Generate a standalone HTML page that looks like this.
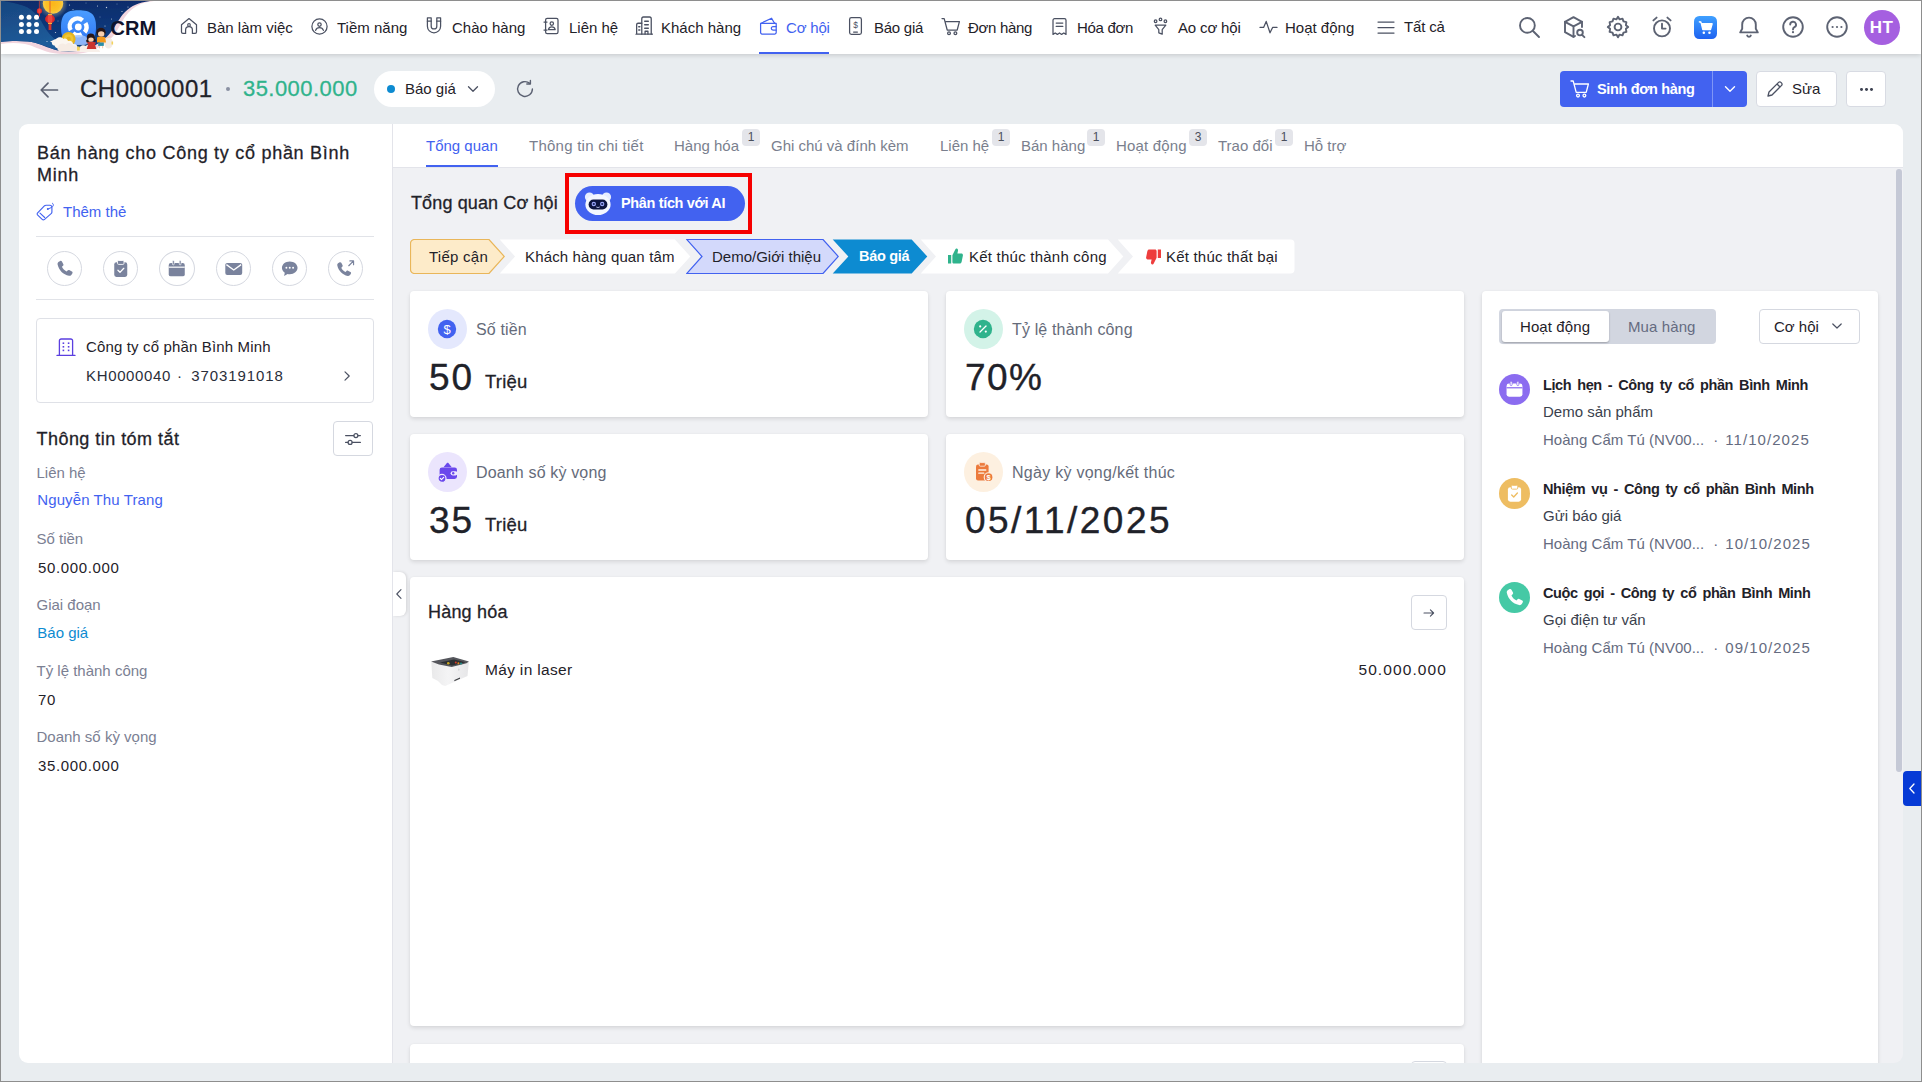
<!DOCTYPE html>
<html lang="vi">
<head>
<meta charset="utf-8">
<title>CRM</title>
<style>
*{box-sizing:border-box;margin:0;padding:0}
html,body{width:1922px;height:1082px;overflow:hidden}
body{font-family:"Liberation Sans",sans-serif;background:#e9edf0;color:#1f2229;position:relative;font-size:15px}
.abs{position:absolute}
.t{position:absolute;white-space:nowrap;line-height:1}
#frame{position:absolute;left:0;top:0;width:1922px;height:1082px;border:1px solid #8e8e8e;z-index:100;pointer-events:none}
/* nav */
#nav{position:absolute;left:1px;top:1px;width:1920px;height:53px;background:#fff;box-shadow:0 1px 5px rgba(0,0,0,.17)}
.ni{position:absolute;top:0;height:53px}
.nt{position:absolute;top:18px;font-size:15px;line-height:17px;white-space:nowrap;color:#1f2229}
.nic{position:absolute}
/* panels */
#left{position:absolute;left:19px;top:124px;width:373px;height:939px;background:#fff;border-radius:9px 0 0 9px}
#main{position:absolute;left:393px;top:124px;width:1510px;height:939px;background:#f0f1f4;border-radius:0 9px 9px 0;overflow:hidden}
#tabs{position:absolute;left:0;top:0;width:1510px;height:44px;background:#fff;border-bottom:1px solid #e3e4ea}
.tab{position:absolute;top:13px;font-size:15px;line-height:17px;color:#7a7f8e;white-space:nowrap}
.bdg{position:absolute;top:5px;width:18px;height:17px;border-radius:4px;background:#e4e5ea;color:#4a4f5c;font-size:12px;line-height:17px;text-align:center}
.card{position:absolute;background:#fff;border-radius:4px;box-shadow:0 2px 4px rgba(0,0,0,.11),0 0 2px rgba(0,0,0,.04)}
.lbl{color:#7b8093}
.ts{-webkit-text-stroke:.28px currentColor}
.blue{color:#4262f0}
</style>
</head>
<body>
<div id="nav">
<svg class="abs" style="left:0;top:0" width="170" height="53" viewBox="1 1 170 53">
<defs>
<linearGradient id="gb" x1="0" y1="0" x2="0" y2="1"><stop offset="0" stop-color="#0a2c6c"/><stop offset="1" stop-color="#114286"/></linearGradient>
<linearGradient id="gw" x1="0" y1="0" x2="0.300" y2="1"><stop offset="0" stop-color="#17457f"/><stop offset="1" stop-color="#1f5c9a"/></linearGradient>
<linearGradient id="gl" x1="0" y1="0" x2="0" y2="1"><stop offset="0" stop-color="#4a9dff"/><stop offset="1" stop-color="#2e74f4"/></linearGradient>
<radialGradient id="gm"><stop offset="0" stop-color="#fbb51a"/><stop offset=".7" stop-color="#fbc128"/><stop offset="1" stop-color="#f8cc4a"/></radialGradient>
<radialGradient id="gg"><stop offset=".6" stop-color="#ffe9a0" stop-opacity=".35"/><stop offset="1" stop-color="#ffe9a0" stop-opacity="0"/></radialGradient>
<filter id="bf"><feGaussianBlur stdDeviation=".35"/></filter>
</defs>
<g filter="url(#bf)">
<path d="M1 1H154C141 2.500 135 6 128.500 12.500C123 18.500 120 26 115.500 33C110 41 100 48 88 52C76 55 62 55 50 52.500C40 50 33 45.500 25 44C16 42.500 8 43 1 44Z" fill="#f1d5de"/>
<path d="M1 1H150C138 2.500 132 5.500 125 12C119 18 116 26 111 32C106 39 98 45 86 49C74 52.500 64 52.500 54 49.500C44 46.500 38 42.500 28 41.500C18 40.500 8 41 1 42Z" fill="url(#gb)"/>
<path d="M1 1H3C14 3 24 5 30 9C37 14 40 19 44 26C48 33 52 37 57 41C60 44 60 47 56 50C46 46.500 38 42.500 28 41.500C18 40.500 8 41 1 42Z" fill="url(#gw)"/>
<circle cx="53" cy="3.500" r="15" fill="url(#gg)"/>
<circle cx="53" cy="3.500" r="10.200" fill="url(#gm)"/>
<path d="M39.400 1V8.500M50 1V14" stroke="#d8342c" stroke-width=".7"/>
<ellipse cx="39.400" cy="11" rx="2.600" ry="2.700" fill="#d92b2b"/><ellipse cx="39.400" cy="11" rx="1.200" ry="2.700" fill="#ee4a40"/>
<rect x="38.900" y="13.600" width="1" height="3" fill="#d8342c"/>
<ellipse cx="50" cy="19" rx="4.900" ry="4.400" fill="#d92b2b"/><ellipse cx="50" cy="19" rx="2.400" ry="4.400" fill="#ee4a40"/>
<rect x="48" y="14" width="4" height="1.100" fill="#f4b43a"/><rect x="48" y="22.900" width="4" height="1.100" fill="#f4b43a"/>
<rect x="48.600" y="24" width="2.800" height="6" fill="#d8342c"/>
<g fill="#fff"><circle cx="21.400" cy="17.200" r="2.500"/><circle cx="29" cy="17.200" r="2.500"/><circle cx="36.500" cy="17.200" r="2.500"/><circle cx="21.400" cy="24.400" r="2.500"/><circle cx="29" cy="24.400" r="2.500"/><circle cx="36.500" cy="24.400" r="2.500"/><circle cx="21.400" cy="31.600" r="2.500"/><circle cx="29" cy="31.600" r="2.500"/><circle cx="36.500" cy="31.600" r="2.500"/></g>
<path d="M78.500 10.200C91 10.200 96 14 96 27C96 40 91 44.200 78.500 44.200C66 44.200 61 40 61 27C61 14 66 10.200 78.500 10.200Z" fill="url(#gl)"/>
<g fill="none" stroke="#fff" stroke-width="4.400"><path d="M70.800 30.200A7.800 7.800 0 0 1 82.600 20.300"/><path d="M85.400 23.200A7.800 7.800 0 0 1 84.600 32.200"/><path d="M81.800 34.200A7.800 7.800 0 0 1 73 33"/></g>
<circle cx="78.300" cy="27" r="3.400" fill="#fff"/>
<path d="M70 38c3-4 14-4 18 0 3 3 0 7-4 7H72c-4 0-5-4-2-7z" fill="#9cc1fb" opacity=".85"/>
<circle cx="68.600" cy="39" r="7" fill="#e6b41e"/><circle cx="68.600" cy="39" r="4.800" fill="#f0c535"/><circle cx="68.600" cy="39" r="2.200" fill="#e6b41e"/>
<path d="M50 41.500c2-.5 4-2 6-2.500 2-2.500 6-2.500 7.500 0 2-1 4 0 4.500 2 2.500-1 5 .5 5 3 3-.5 5 1.500 4.500 4H59c-2 .5-4-.5-4.500-2.500-2 0-3-1.500-2.500-3z" fill="#fbf6f0"/>
<path d="M58 46.500c1-3 5-4 7.500-2 2-2.500 6.500-2 7.500 1 2.500-.5 4.500 1 4.500 3 2 0 3 1.500 2.500 3H61c-3 0-4.500-2.500-3-5z" fill="#f6ece4"/>
<path d="M80 47c1-2 4-2.500 6-1 1-2 5-2 6 0 3-.5 5 1 5 3.500 2 0 3 1 3 2.500H80c-2-1-2-3.500 0-5z" fill="#f8f0ea"/>
<ellipse cx="108.500" cy="43" rx="4.300" ry="5.600" fill="#f3ebe4"/>
<rect x="77" y="46.500" width="2.800" height="4" rx=".6" fill="#f3d35c"/><rect x="111.500" y="41.500" width="1.600" height="3" fill="#f3d35c"/>
<path d="M86.300 42.500l5-1.200 5.200 1.400-1.600 1.200 1.400 5h-9.600l1.600-5z" fill="#c9352e"/>
<circle cx="90.800" cy="37.600" r="4" fill="#2b1912"/><circle cx="87.600" cy="40.800" r="1.500" fill="#2b1912"/><circle cx="94.600" cy="40.400" r="1.300" fill="#2b1912"/><ellipse cx="91" cy="39.600" rx="2.700" ry="2.200" fill="#f7cfae"/>
<circle cx="101" cy="32.300" r="4.600" fill="#2b1912"/><ellipse cx="101.200" cy="34" rx="3.200" ry="2.800" fill="#f7cfae"/>
<path d="M97 38.200c0-1 1-1.400 2-1.400h4c1 0 2.200.4 2.400 1.400l.6 4.300h-9z" fill="#f59a1f"/>
<path d="M105 38.400l5.500-2" stroke="#f7cfae" stroke-width="1.100"/>
<rect x="98.200" y="42.500" width="5.600" height="3.400" fill="#2a8ea6"/>
<path d="M99.500 45.900v2.300M102.600 45.900v2.300" stroke="#f7cfae" stroke-width="1.100"/>
<g fill="#fff" opacity=".75"><circle cx="69.500" cy="5" r=".6"/><circle cx="73" cy="9.500" r=".5"/><circle cx="97.500" cy="6" r=".55"/><circle cx="106.500" cy="7.500" r=".7"/><circle cx="122" cy="11.500" r=".6"/><circle cx="128" cy="7" r=".6"/><circle cx="105" cy="26" r=".55"/><circle cx="111.500" cy="19" r=".5"/><circle cx="55.500" cy="32.500" r=".6"/><circle cx="47" cy="41.500" r=".6"/><circle cx="58" cy="21" r=".45"/><circle cx="86" cy="3" r=".45"/><circle cx="117" cy="4" r=".45"/><circle cx="100" cy="17" r=".45"/></g>
</g>
</svg>
<div class="t" style="left:109.500px;top:15.500px;font-size:20px;font-weight:bold;line-height:22px;color:#10132c;letter-spacing:.05px">CRM</div>
<svg class="abs" style="left:179px;top:16px" width="18" height="18" viewBox="0 0 18 18"><path d="M1.500 7.800 9 1.600l7.500 6.200v7.200a1.400 1.400 0 0 1-1.400 1.400h-2.700v-3.300a3.400 3.400 0 0 0-6.800 0v3.300h-2.700a1.400 1.400 0 0 1-1.400-1.400z" stroke="#4b5162" stroke-width="1.25" fill="none" stroke-linecap="round" stroke-linejoin="round"/><circle cx="9" cy="8" r="1.350" stroke="#4b5162" stroke-width="1.100" fill="none"/></svg>
<div class="nt " style="left:206px">Bàn làm việc</div>
<svg class="abs" style="left:310px;top:17px" width="17" height="17" viewBox="0 0 17 17"><circle cx="8.5" cy="8.5" r="7.6" stroke="#4b5162" stroke-width="1.25" fill="none" stroke-linecap="round" stroke-linejoin="round"/><circle cx="8.5" cy="6.6" r="1.7" stroke="#4b5162" stroke-width="1.25" fill="none" stroke-linecap="round" stroke-linejoin="round"/><path d="M4.6 12.4c.7-2 2.2-2.8 3.9-2.8s3.2.8 3.9 2.8" stroke="#4b5162" stroke-width="1.25" fill="none" stroke-linecap="round" stroke-linejoin="round"/></svg>
<div class="nt " style="left:336px">Tiềm năng</div>
<svg class="abs" style="left:424px;top:15px" width="18" height="19" viewBox="0 0 18 19"><path d="M2.4 1.8h3.8v8.4a2.8 2.8 0 0 0 5.6 0V1.8h3.8v8.4a6.6 6.6 0 0 1-13.2 0z" stroke="#4b5162" stroke-width="1.25" fill="none" stroke-linecap="round" stroke-linejoin="round"/><path d="M2.4 5.2h3.8M11.8 5.2h3.8" stroke="#4b5162" stroke-width="1.25" fill="none" stroke-linecap="round" stroke-linejoin="round"/></svg>
<div class="nt " style="left:451px">Chào hàng</div>
<svg class="abs" style="left:542px;top:16px" width="17" height="18" viewBox="0 0 17 18"><rect x="2.6" y="1.4" width="12.4" height="15.2" rx="1.6" stroke="#4b5162" stroke-width="1.25" fill="none" stroke-linecap="round" stroke-linejoin="round"/><path d="M1 5h3M1 13h3" stroke="#4b5162" stroke-width="1.25" fill="none" stroke-linecap="round" stroke-linejoin="round"/><circle cx="8.8" cy="6.6" r="1.7" stroke="#4b5162" stroke-width="1.25" fill="none" stroke-linecap="round" stroke-linejoin="round"/><path d="M5.4 12.6c.5-2 1.8-2.8 3.4-2.8s2.900.8 3.400 2.800z" stroke="#4b5162" stroke-width="1.25" fill="none" stroke-linecap="round" stroke-linejoin="round"/></svg>
<div class="nt " style="left:568px">Liên hệ</div>
<svg class="abs" style="left:633.500px;top:14px" width="18.500" height="21" viewBox="0 0 18 18" preserveAspectRatio="none"><path d="M6.600 16.400v-13a1.600 1.600 0 0 1 1.600-1.600h6a1.600 1.600 0 0 1 1.600 1.600v13" stroke="#4b5162" stroke-width="1.25" fill="none" stroke-linecap="round" stroke-linejoin="round"/><path d="M1.600 16.400v-8a1.400 1.400 0 0 1 1.400-1.400h3.600M1 16.400h16" stroke="#4b5162" stroke-width="1.25" fill="none" stroke-linecap="round" stroke-linejoin="round"/><path d="M9.400 5.400h3.600M9.400 8.400h3.600M9.400 11.400h3.600M3.600 10h1.200M3.600 12.800h1.200" stroke="#4b5162" stroke-width="1.25" fill="none" stroke-linecap="round" stroke-linejoin="round"/><path d="M9.800 16.400v-2.400h2.800v2.400" stroke="#4b5162" stroke-width="1.25" fill="none" stroke-linecap="round" stroke-linejoin="round"/></svg>
<div class="nt " style="left:660px">Khách hàng</div>
<svg class="abs" style="left:758px;top:16px" width="19" height="18" viewBox="0 0 19 18"><path d="M1.600 6.400h15.600v9.200a1.400 1.400 0 0 1-1.400 1.400h-12.800a1.400 1.400 0 0 1-1.400-1.400z" stroke="#4262f0" stroke-width="1.25" fill="none" stroke-linecap="round" stroke-linejoin="round"/><path d="M2.200 6.200 12.600 1.200l2 3.600M14.600 4.800l1.200 1.400" stroke="#4262f0" stroke-width="1.25" fill="none" stroke-linecap="round" stroke-linejoin="round"/><path d="M17.200 9.600h-3.200a1.700 1.700 0 0 0 0 3.400h3.200" stroke="#4262f0" stroke-width="1.25" fill="none" stroke-linecap="round" stroke-linejoin="round"/></svg>
<div class="nt blue" style="left:785px;letter-spacing:-.2px">Cơ hội</div>
<svg class="abs" style="left:847px;top:15px" width="15" height="20" viewBox="0 0 15 20"><rect x="1.600" y="1.600" width="11.800" height="16.800" rx="1.800" stroke="#4b5162" stroke-width="1.25" fill="none" stroke-linecap="round" stroke-linejoin="round"/><path d="M5.600 16h3.800" stroke="#4b5162" stroke-width="1.25" fill="none" stroke-linecap="round" stroke-linejoin="round"/><text x="7.500" y="12" font-size="8.500" font-family="Liberation Sans" text-anchor="middle" fill="#4b5162">$</text></svg>
<div class="nt " style="left:873px;letter-spacing:-.25px">Báo giá</div>
<svg class="abs" style="left:940px;top:16px" width="20" height="19" viewBox="0 0 20 19"><path d="M1 1.600h2.200l3 11.400h10l2.200-8.400h-13.400" stroke="#4b5162" stroke-width="1.25" fill="none" stroke-linecap="round" stroke-linejoin="round"/><circle cx="8" cy="16.200" r="1.400" stroke="#4b5162" stroke-width="1.25" fill="none" stroke-linecap="round" stroke-linejoin="round"/><circle cx="14.400" cy="16.200" r="1.400" stroke="#4b5162" stroke-width="1.25" fill="none" stroke-linecap="round" stroke-linejoin="round"/></svg>
<div class="nt " style="left:967px;letter-spacing:-.3px">Đơn hàng</div>
<svg class="abs" style="left:1050px;top:16px" width="17" height="19" viewBox="0 0 17 19"><path d="M2 17.400v-14.200a1.600 1.600 0 0 1 1.600-1.600h9.800a1.600 1.600 0 0 1 1.600 1.600v14.200l-2.200-1.400-2.200 1.400-2.100-1.400-2.100 1.400-2.200-1.400z" stroke="#4b5162" stroke-width="1.25" fill="none" stroke-linecap="round" stroke-linejoin="round"/><path d="M5.200 6h6.600M5.200 9.400h6.600" stroke="#4b5162" stroke-width="1.25" fill="none" stroke-linecap="round" stroke-linejoin="round"/></svg>
<div class="nt " style="left:1076px;letter-spacing:-.3px">Hóa đơn</div>
<svg class="abs" style="left:1151px;top:16px" width="17" height="19" viewBox="0 0 17 19"><circle cx="3.600" cy="4.200" r="1.300" stroke="#4b5162" stroke-width="1.25" fill="none" stroke-linecap="round" stroke-linejoin="round"/><circle cx="8.500" cy="2.400" r="1.300" stroke="#4b5162" stroke-width="1.25" fill="none" stroke-linecap="round" stroke-linejoin="round"/><circle cx="13.400" cy="4.200" r="1.300" stroke="#4b5162" stroke-width="1.25" fill="none" stroke-linecap="round" stroke-linejoin="round"/><path d="M3.200 8.200h10.600l-3.600 4.400v4.600l-3.400-1.400v-3.200z" stroke="#4b5162" stroke-width="1.25" fill="none" stroke-linecap="round" stroke-linejoin="round"/></svg>
<div class="nt " style="left:1177px;letter-spacing:-.15px">Ao cơ hội</div>
<svg class="abs" style="left:1258px;top:18px" width="19" height="16" viewBox="0 0 19 16"><path d="M1 8.400h3.600l2.600-6 3.800 11.400 2.600-5.400h4.400" stroke="#4b5162" stroke-width="1.25" fill="none" stroke-linecap="round" stroke-linejoin="round"/></svg>
<div class="nt " style="left:1284px">Hoạt động</div>
<svg class="abs" style="left:1376px;top:19px" width="18" height="15" viewBox="0 0 18 15"><path d="M1 2h16M1 7.500h16M1 13h16" stroke="#4b5162" stroke-width="1.25" fill="none" stroke-linecap="round" stroke-linejoin="round"/></svg>
<div class="nt " style="left:1403px;top:16.500px;letter-spacing:-.15px">Tất cả</div>
<div class="abs" style="left:758px;top:51px;width:70px;height:2px;background:#4262f0"></div>
<svg class="abs" style="left:1516px;top:14px" width="24" height="24" viewBox="0 0 24 24"><circle cx="10.400" cy="10.400" r="7.400" stroke="#5d6373" stroke-width="1.900" fill="none" stroke-linecap="round" stroke-linejoin="round"/><path d="M16 16l6 6" stroke="#5d6373" stroke-width="1.900" fill="none" stroke-linecap="round" stroke-linejoin="round"/></svg>
<svg class="abs" style="left:1561px;top:14px" width="24" height="24" viewBox="0 0 24 24"><path d="M20 12v-5.200l-8.500-4.600-8.500 4.600v10.400l8.500 4.600 1.500-.8" stroke="#5d6373" stroke-width="1.900" fill="none" stroke-linecap="round" stroke-linejoin="round"/><path d="M3 6.800l8.500 4.600 8.500-4.600M11.500 11.400v10.400" stroke="#5d6373" stroke-width="1.900" fill="none" stroke-linecap="round" stroke-linejoin="round"/><circle cx="18" cy="17.600" r="2.800" stroke="#5d6373" stroke-width="1.900" fill="none" stroke-linecap="round" stroke-linejoin="round"/><path d="M20 19.800l2.400 2.400" stroke="#5d6373" stroke-width="1.900" fill="none" stroke-linecap="round" stroke-linejoin="round"/></svg>
<svg class="abs" style="left:1605px;top:14px" width="24" height="24" viewBox="0 0 24 24"><circle cx="12" cy="12" r="3.400" stroke="#5d6373" stroke-width="1.900" fill="none" stroke-linecap="round" stroke-linejoin="round"/><path d="M12 1.800l1.600 2.600 2.900-.8 1 2.800 2.900.8-.5 3 2.300 1.800-2.300 1.800.5 3-2.900.8-1 2.800-2.900-.8-1.600 2.600-1.600-2.600-2.900.8-1-2.800-2.900-.8.500-3-2.300-1.800 2.300-1.800-.5-3 2.900-.8 1-2.800 2.900.8z" stroke="#5d6373" stroke-width="1.900" fill="none" stroke-linecap="round" stroke-linejoin="round"/></svg>
<svg class="abs" style="left:1649px;top:14px" width="24" height="24" viewBox="0 0 24 24"><circle cx="12" cy="13.400" r="8" stroke="#5d6373" stroke-width="1.900" fill="none" stroke-linecap="round" stroke-linejoin="round"/><path d="M12 8.800v4.800h3.600M3.400 5.400l3.200-2.800M20.600 5.400l-3.200-2.800" stroke="#5d6373" stroke-width="1.900" fill="none" stroke-linecap="round" stroke-linejoin="round"/></svg>
<svg class="abs" style="left:1693px;top:15px" width="23" height="23" viewBox="0 0 22 22"><defs><linearGradient id="gc" x1="0" y1="0" x2="0" y2="1"><stop offset="0" stop-color="#3fa0ff"/><stop offset="1" stop-color="#1e62f0"/></linearGradient></defs><rect width="22" height="22" rx="5" fill="url(#gc)"/><path d="M4.600 5.600h2l1.800 7.400h7.400l1.600-5.600h-10" fill="#fff" stroke="#fff" stroke-width="1.200" stroke-linejoin="round"/><circle cx="9.400" cy="16" r="1.200" fill="#fff"/><circle cx="14.800" cy="16" r="1.200" fill="#fff"/></svg>
<svg class="abs" style="left:1736px;top:14px" width="24" height="24" viewBox="0 0 24 24"><path d="M12 2.600a6.800 6.800 0 0 0-6.800 6.800v4.400l-2 3.600h17.600l-2-3.600v-4.400a6.800 6.800 0 0 0-6.800-6.800z" stroke="#5d6373" stroke-width="1.900" fill="none" stroke-linecap="round" stroke-linejoin="round"/><path d="M10.200 20.600a2 2 0 0 0 3.600 0" stroke="#5d6373" stroke-width="1.900" fill="none" stroke-linecap="round" stroke-linejoin="round"/></svg>
<svg class="abs" style="left:1780px;top:14px" width="24" height="24" viewBox="0 0 24 24"><circle cx="12" cy="12" r="9.800" stroke="#5d6373" stroke-width="1.900" fill="none" stroke-linecap="round" stroke-linejoin="round"/><path d="M9.200 9.600a2.900 2.900 0 1 1 4.200 2.600c-.9.500-1.400 1.100-1.400 2.200" stroke="#5d6373" stroke-width="1.900" fill="none" stroke-linecap="round" stroke-linejoin="round"/><circle cx="12" cy="17.200" r="1.100" fill="#5d6373"/></svg>
<svg class="abs" style="left:1824px;top:14px" width="24" height="24" viewBox="0 0 24 24"><circle cx="12" cy="12" r="9.800" stroke="#5d6373" stroke-width="1.900" fill="none" stroke-linecap="round" stroke-linejoin="round"/><circle cx="7.600" cy="12" r="1.100" fill="#5d6373"/><circle cx="12" cy="12" r="1.100" fill="#5d6373"/><circle cx="16.400" cy="12" r="1.100" fill="#5d6373"/></svg>
<div class="abs" style="left:1862.500px;top:9px;width:36px;height:35px;border-radius:50%;background:#a55fe0;color:#fff;font-weight:bold;font-size:17px;line-height:35px;letter-spacing:.3px;text-align:center">HT</div>
</div>
<div id="hdr">
<svg class="abs" style="left:39px;top:80px" width="20" height="20" viewBox="0 0 20 20"><path d="M18.500 10h-16M9 3.200l-6.800 6.800 6.800 6.800" stroke="#5b6172" stroke-width="1.700" fill="none" stroke-linecap="round" stroke-linejoin="round"/></svg>
<div class="t ts" id="code" style="left:80px;top:75px;font-size:24px;line-height:28px;color:#1f2229;letter-spacing:.5px">CH0000001</div>
<div class="abs" style="left:226px;top:87px;width:4px;height:4px;border-radius:50%;background:#8a90a2"></div>
<div class="t ts" id="amt" style="left:243px;top:76px;font-size:22px;line-height:26px;color:#2fb38c;letter-spacing:.45px">35.000.000</div>
<div class="abs" style="left:374px;top:71px;width:121px;height:36px;border-radius:18px;background:#fff"></div>
<div class="abs" style="left:387px;top:85px;width:8px;height:8px;border-radius:50%;background:#0d8bd1"></div>
<div class="t" style="left:405px;top:80px;font-size:15px;line-height:17px;color:#1f2229">Báo giá</div>
<svg class="abs" style="left:467px;top:83px" width="12" height="12" viewBox="0 0 12 12"><path d="M1.500 3.800l4.500 4.400 4.500-4.400" stroke="#4b5162" stroke-width="1.300" fill="none" stroke-linecap="round" stroke-linejoin="round"/></svg>
<svg class="abs" style="left:515px;top:79px" width="20" height="20" viewBox="0 0 20 20"><path d="M17.400 10a7.400 7.400 0 1 1-2.600-5.600" stroke="#5b6172" stroke-width="1.400" fill="none" stroke-linecap="round"/><path d="M15.400 1.400v3.600h-3.600" stroke="#5b6172" stroke-width="1.400" fill="none" stroke-linecap="round" stroke-linejoin="round"/></svg>
<div class="abs" style="left:1560px;top:71px;width:187px;height:36px;border-radius:4px;background:#4262f0"></div>
<div class="abs" style="left:1712px;top:71px;width:1px;height:36px;background:#7f96f6"></div>
<svg class="abs" style="left:1570px;top:79px" width="20" height="20" viewBox="0 0 20 20"><path d="M1 2h2.200l3 11.400h10l2.200-8.400h-13.400" stroke="#fff" stroke-width="1.300" fill="none" stroke-linecap="round" stroke-linejoin="round"/><circle cx="8" cy="16.600" r="1.400" stroke="#fff" stroke-width="1.300" fill="none"/><circle cx="14.400" cy="16.600" r="1.400" stroke="#fff" stroke-width="1.300" fill="none"/></svg>
<div class="t" id="sdh" style="left:1597px;top:81px;font-size:14.500px;line-height:17px;color:#fff;font-weight:bold;letter-spacing:-.36px">Sinh đơn hàng</div>
<svg class="abs" style="left:1724px;top:83px" width="12" height="12" viewBox="0 0 12 12"><path d="M1.500 3.800l4.500 4.400 4.500-4.400" stroke="#fff" stroke-width="1.400" fill="none" stroke-linecap="round" stroke-linejoin="round"/></svg>
<div class="abs" style="left:1756px;top:71px;width:81px;height:36px;border-radius:4px;background:#fff;border:1px solid #d8dbe3"></div>
<svg class="abs" style="left:1766px;top:80px" width="18" height="18" viewBox="0 0 18 18"><path d="M2 16l1-4 9.600-9.600a1.600 1.600 0 0 1 2.300 0l.7.700a1.600 1.600 0 0 1 0 2.300l-9.600 9.600zM11 4l3 3" stroke="#4b5162" stroke-width="1.300" fill="none" stroke-linecap="round" stroke-linejoin="round"/></svg>
<div class="t" style="left:1792px;top:80px;font-size:15px;line-height:17px;color:#1f2229">Sửa</div>
<div class="abs" style="left:1846px;top:71px;width:40px;height:36px;border-radius:4px;background:#fff;border:1px solid #d8dbe3"></div>
<div class="abs" style="left:1860px;top:88px;width:2.800px;height:2.800px;border-radius:50%;background:#3f4453;box-shadow:5px 0 0 #3f4453,10px 0 0 #3f4453"></div>
</div>
<div id="left">
<div class="abs ts" id="ttl" style="left:18px;top:18px;width:340px;font-size:18px;line-height:22px;color:#1f2229;letter-spacing:.72px">Bán hàng cho Công ty cổ phần Bình Minh</div>
<svg class="abs" style="left:17px;top:78px" width="20" height="20" viewBox="0 0 20 20"><path d="M1.400 11.200 8.600 3.700Q9.200 3.200 10 3.200L14.200 3.200Q15.900 3.400 15.900 5.200L15.900 10Q15.900 10.800 15.400 11.400L8.300 17.600Q7.200 18.400 6.200 17.400L1.500 12.900Q.8 12 1.400 11.200Z" stroke="#4262f0" stroke-width="1.150" fill="none" stroke-linejoin="round"/><path d="M4 11.100 8.700 15.500" stroke="#4262f0" stroke-width="1.100" fill="none" stroke-linecap="round"/><circle cx="11.800" cy="7.100" r="1" fill="#4262f0"/><path d="M11.800 7.100 15 5.700C17.200 4.600 18.400 2.800 16.400 1.200" stroke="#4262f0" stroke-width="1" fill="none" stroke-linecap="round"/></svg>
<div class="t blue" style="left:44px;top:79px;font-size:15px;line-height:17px">Thêm thẻ</div>
<div class="abs" style="left:17px;top:112px;width:338px;height:1px;background:#e1e3e8"></div>
<div class="abs" style="left:28px;top:127px;width:35px;height:35px;border-radius:50%;border:1px solid #d5d8e0;background:#fff"></div><svg class="abs" style="left:36.3px;top:135.300px" width="19.500" height="19.500" viewBox="0 0 18 18"><path d="M4.800 1.800c.6-.3 1.300-.1 1.600.5l1.300 2.500c.3.5.1 1.100-.3 1.500l-1 .9c.9 2 2.300 3.400 4.300 4.300l.9-1c.4-.4 1-.6 1.500-.3l2.500 1.300c.6.300.8 1 .5 1.600l-.7 1.300c-.5.900-1.500 1.300-2.500 1.100-5.400-1.200-9.300-5.100-10.500-10.500-.2-1 .2-2 1.100-2.500z" fill="#7a839d"/></svg>
<div class="abs" style="left:84px;top:127px;width:35px;height:35px;border-radius:50%;border:1px solid #d5d8e0;background:#fff"></div><svg class="abs" style="left:92.3px;top:135.300px" width="19.500" height="19.500" viewBox="0 0 18 18"><rect x="3" y="3" width="12" height="13.600" rx="2" fill="#7a839d"/><rect x="6" y="1.400" width="6" height="3.600" rx="1" fill="#7a839d" stroke="#fff" stroke-width=".8"/><path d="M6.400 10.400l1.900 1.900 3.500-3.700" stroke="#fff" stroke-width="1.200" fill="none" stroke-linecap="round" stroke-linejoin="round"/></svg>
<div class="abs" style="left:140px;top:127px;width:36px;height:35px;border-radius:50%;border:1px solid #d5d8e0;background:#fff"></div><svg class="abs" style="left:148.3px;top:135.300px" width="19.500" height="19.500" viewBox="0 0 18 18"><rect x="1.600" y="3.600" width="14.800" height="12.400" rx="2" fill="#7a839d"/><rect x="1.600" y="7" width="14.800" height="1.100" fill="#fff"/><rect x="5" y="1.400" width="1.700" height="4" rx=".8" fill="#7a839d" stroke="#fff" stroke-width=".6"/><rect x="11.300" y="1.400" width="1.700" height="4" rx=".8" fill="#7a839d" stroke="#fff" stroke-width=".6"/></svg>
<div class="abs" style="left:197px;top:127px;width:35px;height:35px;border-radius:50%;border:1px solid #d5d8e0;background:#fff"></div><svg class="abs" style="left:205.3px;top:135.300px" width="19.500" height="19.500" viewBox="0 0 18 18"><rect x="1.200" y="3.600" width="15.600" height="11.200" rx="1.800" fill="#7a839d"/><path d="M2.200 5.200 9 10.200l6.800-5" stroke="#fff" stroke-width="1.200" fill="none" stroke-linejoin="round"/></svg>
<div class="abs" style="left:253px;top:127px;width:35px;height:35px;border-radius:50%;border:1px solid #d5d8e0;background:#fff"></div><svg class="abs" style="left:261.3px;top:135.300px" width="19.500" height="19.500" viewBox="0 0 18 18"><path d="M9 2.200c4.100 0 7.200 2.600 7.200 5.900s-3.100 5.900-7.200 5.900c-.7 0-1.400-.1-2-.2l-3.200 1.800.6-2.900c-1.600-1.100-2.600-2.700-2.600-4.600 0-3.300 3.100-5.900 7.200-5.900z" fill="#7a839d"/><circle cx="5.900" cy="8.100" r=".9" fill="#fff"/><circle cx="9" cy="8.100" r=".9" fill="#fff"/><circle cx="12.100" cy="8.100" r=".9" fill="#fff"/></svg>
<div class="abs" style="left:309px;top:127px;width:35px;height:35px;border-radius:50%;border:1px solid #d5d8e0;background:#fff"></div><svg class="abs" style="left:317.3px;top:135.300px" width="19.500" height="19.500" viewBox="0 0 18 18"><g transform="translate(-1 1.400) scale(.92)"><path d="M4.800 1.800c.6-.3 1.300-.1 1.600.5l1.300 2.500c.3.5.1 1.100-.3 1.500l-1 .9c.9 2 2.300 3.400 4.300 4.300l.9-1c.4-.4 1-.6 1.500-.3l2.500 1.300c.6.300.8 1 .5 1.600l-.7 1.300c-.5.900-1.500 1.300-2.500 1.100-5.400-1.200-9.300-5.100-10.500-10.500-.2-1 .2-2 1.100-2.500z" fill="#7a839d"/></g><path d="M11.800 6.200l4.200-4.200M12.800 1.800h3.400v3.400" stroke="#7a839d" stroke-width="1.100" fill="none" stroke-linecap="round" stroke-linejoin="round"/></svg>
<div class="abs" style="left:17px;top:175px;width:338px;height:1px;background:#e1e3e8"></div>
<div class="abs" style="left:17px;top:194px;width:338px;height:85px;border:1px solid #dfe1e7;border-radius:4px"></div>
<svg class="abs" style="left:37px;top:213px" width="20" height="20" viewBox="0 0 20 20"><path d="M3.400 18.400v-14.600a1.800 1.800 0 0 1 1.800-1.800h9.600a1.800 1.800 0 0 1 1.800 1.800v14.600M1 18.400h18" stroke="#5b3fe0" stroke-width="1.300" fill="none" stroke-linecap="round" stroke-linejoin="round"/><g fill="#5b3fe0"><rect x="6.600" y="5.400" width="1.600" height="1.600"/><rect x="11.800" y="5.400" width="1.600" height="1.600"/><rect x="6.600" y="9" width="1.600" height="1.600"/><rect x="11.800" y="9" width="1.600" height="1.600"/><rect x="6.600" y="12.600" width="1.600" height="1.600"/><rect x="11.800" y="12.600" width="1.600" height="1.600"/></g></svg>
<div class="t" id="cname" style="left:67px;top:214px;font-size:15px;line-height:17px;color:#1f2229;letter-spacing:.15px">Công ty cổ phần Bình Minh</div>
<div class="t" id="ccode" style="left:67px;top:243px;font-size:15px;line-height:17px;color:#2a2e3a;letter-spacing:.65px">KH0000040<span style="margin:0 8.500px 0 6px">·</span><span style="letter-spacing:.92px">3703191018</span></div>
<svg class="abs" style="left:322px;top:246px" width="12" height="12" viewBox="0 0 12 12"><path d="M4 1.800l4.200 4.200-4.200 4.200" stroke="#4b5162" stroke-width="1.200" fill="none" stroke-linecap="round" stroke-linejoin="round"/></svg>
<div class="t ts" id="tt" style="left:17.500px;top:304px;font-size:18px;line-height:22px;color:#1f2229;letter-spacing:.46px">Thông tin tóm tắt</div>
<div class="abs" style="left:314px;top:297px;width:40px;height:35px;border:1px solid #d5d8e0;border-radius:4px"></div>
<svg class="abs" style="left:325px;top:306px" width="18" height="18" viewBox="0 0 18 18"><path d="M1.600 5.600h8.200M14 5.600h2.400M1.600 12.400h2.400M8.200 12.400h8.200" stroke="#4b5162" stroke-width="1.200" fill="none" stroke-linecap="round"/><circle cx="11.900" cy="5.600" r="2" stroke="#4b5162" stroke-width="1.200" fill="none"/><circle cx="6.100" cy="12.400" r="2" stroke="#4b5162" stroke-width="1.200" fill="none"/></svg>
<div class="t lbl" style="left:17.500px;top:340px;font-size:15px;line-height:17px">Liên hệ</div>
<div class="t blue" style="left:18.300px;top:367px;font-size:15px;line-height:17px;letter-spacing:.1px">Nguyễn Thu Trang</div>
<div class="t lbl" style="left:17.500px;top:406px;font-size:15px;line-height:17px">Số tiền</div>
<div class="t" style="left:19px;top:435px;font-size:15px;line-height:17px;letter-spacing:.63px">50.000.000</div>
<div class="t lbl" style="left:17.500px;top:472px;font-size:15px;line-height:17px">Giai đoạn</div>
<div class="t" style="left:18.300px;top:500px;font-size:15px;line-height:17px;color:#0d8bd1">Báo giá</div>
<div class="t lbl" style="left:17.500px;top:538px;font-size:15px;line-height:17px">Tỷ lệ thành công</div>
<div class="t" style="left:19px;top:567px;font-size:15px;line-height:17px;letter-spacing:.63px">70</div>
<div class="t lbl" style="left:17.500px;top:604px;font-size:15px;line-height:17px">Doanh số kỳ vọng</div>
<div class="t" style="left:19px;top:633px;font-size:15px;line-height:17px;letter-spacing:.63px">35.000.000</div>
</div>
<div class="abs" style="left:392px;top:124px;width:1px;height:939px;background:#e3e4ea"></div>
<div id="main"><div id="tabs"><div class="tab blue" style="left:33px">Tổng quan</div><div class="abs" style="left:33px;top:41px;width:72px;height:2px;background:#4262f0"></div><div class="tab " style="left:136px;letter-spacing:.25px">Thông tin chi tiết</div><div class="tab " style="left:281px">Hàng hóa</div><div class="bdg" style="left:349px">1</div><div class="tab " style="left:378px">Ghi chú và đính kèm</div><div class="tab " style="left:547px">Liên hệ</div><div class="bdg" style="left:599px">1</div><div class="tab " style="left:628px">Bán hàng</div><div class="bdg" style="left:694px">1</div><div class="tab " style="left:723px;letter-spacing:.17px">Hoạt động</div><div class="bdg" style="left:796px">3</div><div class="tab " style="left:825px">Trao đổi</div><div class="bdg" style="left:882px">1</div><div class="tab " style="left:911px">Hỗ trợ</div></div><div class="t ts" id="tq" style="left:18px;top:68px;font-size:18px;line-height:22px;color:#1f2229;letter-spacing:.12px">Tổng quan Cơ hội</div>
<div class="abs" style="left:172px;top:49px;width:187px;height:61px;border:4px solid #f60000"></div>
<div class="abs" style="left:182px;top:62px;width:170px;height:35px;border-radius:18px;background:#4262f0"></div>
<svg class="abs" style="left:190px;top:66px" width="30" height="27" viewBox="0 0 30 27">
<circle cx="6.500" cy="7" r="4.600" fill="#e6edff"/><circle cx="23.500" cy="7" r="4.600" fill="#e6edff"/>
<ellipse cx="15" cy="14.500" rx="12.600" ry="10.600" fill="#f4f7ff"/>
<rect x="5.600" y="9.600" width="18.800" height="9.800" rx="4.900" fill="#0c1440"/>
<circle cx="10.800" cy="14" r="2.200" fill="#9aa6f7"/><circle cx="19.200" cy="14" r="2.200" fill="#9aa6f7"/><circle cx="10.800" cy="14" r="1.100" fill="#1a2460"/><circle cx="19.200" cy="14" r="1.100" fill="#1a2460"/><path d="M13.600 17.200q1.400 1 2.800 0" stroke="#cfd6ff" stroke-width=".8" fill="none" stroke-linecap="round"/>
</svg>
<div class="t" id="ai" style="left:228px;top:71px;font-size:14.500px;line-height:17px;color:#fff;font-weight:bold;letter-spacing:-.35px">Phân tích với AI</div><svg class="abs" style="left:17px;top:115px" width="95" height="35" viewBox="0 0 95 35"><path d="M4.500 .5H79L94.3 17.5L79 34.5H4.500A4 4 0 0 1 .5 30.5V4.500A4 4 0 0 1 4.500 .5Z" fill="#fdebc9" stroke="#e9b65a" stroke-width="1.200"/></svg><div class="t" style="left:36px;top:124px;font-size:15px;line-height:17px;color:#1f2229;letter-spacing:.25px">Tiếp cận</div><svg class="abs" style="left:106px;top:115px" width="192" height="35" viewBox="0 0 191 35" preserveAspectRatio="none"><path d="M.7 .5H175L190.3 17.5L175 34.5H.7L16 17.5Z" fill="#fff" /></svg><div class="t" style="left:132px;top:124px;font-size:15px;line-height:17px;color:#1f2229;letter-spacing:.15px">Khách hàng quan tâm</div><svg class="abs" style="left:293px;top:115px" width="153" height="35" viewBox="0 0 153 35"><path d="M.7 .5H137L152.3 17.5L137 34.5H.7L16 17.5Z" fill="#d3d9fb" stroke="#4262f0" stroke-width="1.200"/></svg><div class="t" style="left:319px;top:124px;font-size:15px;line-height:17px;color:#1f2229;">Demo/Giới thiệu</div><svg class="abs" style="left:439px;top:115px" width="96" height="35" viewBox="0 0 94 35" preserveAspectRatio="none"><path d="M.7 .5H78L93.3 17.5L78 34.5H.7L16 17.5Z" fill="#0d8bd1" /></svg><div class="t" style="left:466px;top:124px;font-size:15px;line-height:17px;color:#fff;font-weight:bold;font-size:14.500px;letter-spacing:-.3px">Báo giá</div><svg class="abs" style="left:527px;top:115px" width="204" height="35" viewBox="0 0 204 35"><path d="M.7 .5H188L203.3 17.5L188 34.5H.7L16 17.5Z" fill="#fff" /></svg><div class="t" style="left:576px;top:124px;font-size:15px;line-height:17px;color:#1f2229;letter-spacing:.23px">Kết thúc thành công</div><svg class="abs" style="left:724px;top:115px" width="178" height="35" viewBox="0 0 178 35"><path d="M.7 .5H173.5A4 4 0 0 1 177.5 4.500V30.5A4 4 0 0 1 173.5 34.5H.7L16 17.5Z" fill="#fff" /></svg><div class="t" style="left:773px;top:124px;font-size:15px;line-height:17px;color:#1f2229;letter-spacing:.2px">Kết thúc thất bại</div><svg class="abs" style="left:554px;top:123px" width="17" height="18" viewBox="0 0 17 18"><path d="M1 8h3.200v8.600h-3.200zM5.400 8.200l3-6c.3-.7 1-.9 1.600-.6.900.4 1.200 1.300 1 2.200l-.6 2.800h4c1 0 1.700.9 1.500 1.900l-1.300 6.500c-.2.900-.9 1.500-1.800 1.500h-5.800c-.9 0-1.600-.7-1.600-1.600z" fill="#2fb38c"/></svg><svg class="abs" style="left:752px;top:124px" width="17" height="18" viewBox="0 0 17 18"><g transform="rotate(180 8.500 9)"><path d="M1 8h3.200v8.600h-3.200zM5.400 8.200l3-6c.3-.7 1-.9 1.600-.6.900.4 1.200 1.300 1 2.200l-.6 2.800h4c1 0 1.700.9 1.500 1.900l-1.300 6.500c-.2.900-.9 1.500-1.800 1.500h-5.800c-.9 0-1.600-.7-1.600-1.600z" fill="#ee3d3d"/></g></svg><div class="card" style="left:17px;top:167px;width:518px;height:126px"><div class="abs" style="left:18px;top:18px;width:39px;height:40px;border-radius:50%;background:#e4e8fd"></div><svg class="abs" style="left:27.300px;top:28px" width="20" height="20" viewBox="0 0 20 20"><circle cx="10" cy="10" r="9.200" fill="#4262f0"/><text x="10" y="14.600" font-size="13" font-family="Liberation Sans" text-anchor="middle" fill="#fff">$</text></svg><div class="t" style="left:66px;top:28.600px;font-size:16px;line-height:19px;color:#656b7a;letter-spacing:.15px">Số tiền</div><div class="t" style="left:19px;top:66px;font-size:37px;line-height:42px;color:#1f2229;-webkit-text-stroke:.38px #1f2229;letter-spacing:2px">50</div><div class="t" style="left:75px;top:80px;font-size:18.500px;line-height:22px;color:#1f2229;letter-spacing:.2px;-webkit-text-stroke:.28px #1f2229">Triệu</div></div><div class="card" style="left:553px;top:167px;width:518px;height:126px"><div class="abs" style="left:18px;top:18px;width:39px;height:40px;border-radius:50%;background:#d3f3e8"></div><svg class="abs" style="left:27.300px;top:28px" width="20" height="20" viewBox="0 0 20 20"><circle cx="10" cy="10" r="9.200" fill="#2fb38c"/><path d="M7 13l6-6" stroke="#fff" stroke-width="1.300" stroke-linecap="round"/><circle cx="7.200" cy="7.400" r="1.100" fill="#fff"/><circle cx="12.800" cy="12.600" r="1.100" fill="#fff"/></svg><div class="t" style="left:66px;top:28.600px;font-size:16px;line-height:19px;color:#656b7a;letter-spacing:.15px">Tỷ lệ thành công</div><div class="t" style="left:19px;top:66px;font-size:37px;line-height:42px;color:#1f2229;-webkit-text-stroke:.38px #1f2229;letter-spacing:1.400px">70%</div></div><div class="card" style="left:17px;top:310px;width:518px;height:126px"><div class="abs" style="left:18px;top:18px;width:39px;height:40px;border-radius:50%;background:#ebe5fd"></div><svg class="abs" style="left:26.500px;top:27px" width="22" height="22" viewBox="0 0 22 22"><path d="M6.500 6.200l3.400-4.200c.4-.5 1.100-.5 1.500 0l3.400 4.200z" fill="#6a48ec"/><rect x="2.600" y="6.400" width="17.400" height="11.600" rx="2.400" fill="#6a48ec"/><rect x="13.600" y="10.200" width="7" height="4.200" rx="2.100" fill="#efeafd"/><circle cx="16.200" cy="12.300" r="1.200" fill="#6a48ec"/><circle cx="5" cy="17.400" r="4" fill="#6a48ec" stroke="#efeafd" stroke-width="1.200"/><path d="M3.300 17.400l1.200 1.300 2.200-2.400" stroke="#fff" stroke-width="1.100" fill="none" stroke-linecap="round" stroke-linejoin="round"/></svg><div class="t" style="left:66px;top:28.600px;font-size:16px;line-height:19px;color:#656b7a;letter-spacing:.15px">Doanh số kỳ vọng</div><div class="t" style="left:19px;top:66px;font-size:37px;line-height:42px;color:#1f2229;-webkit-text-stroke:.38px #1f2229;letter-spacing:2px">35</div><div class="t" style="left:75px;top:80px;font-size:18.500px;line-height:22px;color:#1f2229;letter-spacing:.2px;-webkit-text-stroke:.28px #1f2229">Triệu</div></div><div class="card" style="left:553px;top:310px;width:518px;height:126px"><div class="abs" style="left:18px;top:18px;width:39px;height:40px;border-radius:50%;background:#fdf0e0"></div><svg class="abs" style="left:27.300px;top:27px" width="22" height="22" viewBox="0 0 22 22"><rect x="3" y="3.400" width="12.600" height="16.200" rx="2" fill="#ec7a3c"/><rect x="6.200" y="1.600" width="6.200" height="3.600" rx="1.200" fill="#ec7a3c" stroke="#fdf2e6" stroke-width=".8"/><path d="M5.800 9h7M5.800 12.200h5" stroke="#fdf2e6" stroke-width="1.300" stroke-linecap="round"/><circle cx="15.600" cy="16.200" r="4.400" fill="#ec7a3c" stroke="#fdf2e6" stroke-width="1.100"/><text x="15.600" y="19" font-size="7.500" font-family="Liberation Sans" font-weight="bold" text-anchor="middle" fill="#fff">$</text></svg><div class="t" style="left:66px;top:28.600px;font-size:16px;line-height:19px;color:#656b7a;letter-spacing:.27px">Ngày kỳ vọng/kết thúc</div><div class="t" style="left:19px;top:66px;font-size:37px;line-height:42px;color:#1f2229;-webkit-text-stroke:.38px #1f2229;letter-spacing:2.450px">05/11/2025</div></div><div class="card" style="left:17px;top:453px;width:1054px;height:449px">
<div class="t ts" style="left:18px;top:24px;font-size:18px;line-height:22px;color:#1f2229;letter-spacing:.2px">Hàng hóa</div>
<div class="abs" style="left:1001px;top:18px;width:36px;height:35px;border:1px solid #d5d8e0;border-radius:4px"></div>
<svg class="abs" style="left:1012px;top:29px" width="14" height="14" viewBox="0 0 14 14"><path d="M2 7h9.600M8.400 3.800l3.200 3.200-3.200 3.200" stroke="#4b5162" stroke-width="1.100" fill="none" stroke-linecap="round" stroke-linejoin="round"/></svg>
<svg class="abs" style="left:18px;top:70px" width="44" height="44" viewBox="0 0 44 44">
<defs><linearGradient id="pb" x1="0" y1="0" x2="1" y2="0"><stop offset="0" stop-color="#e9e9ea"/><stop offset=".45" stop-color="#f4f4f5"/><stop offset="1" stop-color="#e6e6e8"/></linearGradient><filter id="pf"><feGaussianBlur stdDeviation=".45"/></filter></defs>
<g filter="url(#pf)">
<path d="M3.300 14.600 4.300 31 10 34l4 4 3.200 1 22.300-10 1.400-14.600-17 5.600z" fill="url(#pb)"/>
<path d="M3.100 14.400 25.300 10 40.900 14.400 38.500 16.200 23.700 20 11 17.600z" fill="#54565b"/>
<path d="M12 15.600 26 12.400 37.600 15.200 24 18.600z" fill="#2b2d30"/>
<circle cx="20.300" cy="16.200" r="1.300" fill="#c9a623"/><circle cx="27.800" cy="15.400" r="1" fill="#d63a2a"/><circle cx="30.400" cy="16.300" r="1" fill="#e08a1e"/><circle cx="33" cy="16.400" r="1" fill="#1e8f8a"/>
<path d="M26.400 33 32 30.600v1.200l-5.600 2.400z" fill="#3a3c40"/>
<ellipse cx="30.800" cy="22.600" rx=".7" ry="1.200" fill="#d0d1d4"/>
</g>
</svg>
<div class="t" style="left:75px;top:84px;font-size:15.500px;line-height:18px;color:#1f2229;letter-spacing:.32px">Máy in laser</div>
<div class="t" style="right:17px;top:84px;font-size:15.500px;line-height:18px;color:#1f2229;letter-spacing:1.100px">50.000.000</div>
</div>
<div class="card" style="left:17px;top:920px;width:1054px;height:100px">
<div class="abs" style="left:1001px;top:17px;width:36px;height:35px;border:1px solid #d5d8e0;border-radius:4px"></div>
</div><div class="card" style="left:1089px;top:167px;width:396px;height:780px;border-radius:4px 4px 0 0">
<div class="abs" style="left:17px;top:18px;width:217px;height:35px;border-radius:4px;background:#d2d6e0"></div>
<div class="abs" style="left:20px;top:20px;width:107px;height:31px;border-radius:3px;background:#fff;box-shadow:0 1px 2px rgba(0,0,0,.25)"></div>
<div class="t" style="left:38px;top:27px;font-size:15px;line-height:17px;color:#1f2229;letter-spacing:.1px">Hoạt động</div>
<div class="t" style="left:146px;top:27px;font-size:15px;line-height:17px;color:#656b80;letter-spacing:.1px">Mua hàng</div>
<div class="abs" style="left:277px;top:18px;width:101px;height:35px;border:1px solid #d5d8e0;border-radius:4px"></div>
<div class="t" style="left:292px;top:27px;font-size:15px;line-height:17px;color:#1f2229">Cơ hội</div>
<svg class="abs" style="left:349px;top:29px" width="12" height="12" viewBox="0 0 12 12"><path d="M1.800 4l4.200 4 4.200-4" stroke="#4b5162" stroke-width="1.200" fill="none" stroke-linecap="round" stroke-linejoin="round"/></svg>
<div class="abs" style="left:17px;top:83px;width:31px;height:31px;border-radius:50%;background:#8b6cf0"></div><svg class="abs" style="left:23px;top:83px;margin-top:6px" width="19" height="19" viewBox="0 0 17 17"><rect x="1.400" y="3.200" width="14.200" height="11.800" rx="2.200" fill="#fff"/><rect x="1.400" y="6.400" width="14.200" height="1.100" fill="#8b6cf0"/><rect x="4.600" y="1.200" width="1.800" height="3.800" rx=".9" fill="#fff" stroke="#8b6cf0" stroke-width=".7"/><rect x="10.600" y="1.200" width="1.800" height="3.800" rx=".9" fill="#fff" stroke="#8b6cf0" stroke-width=".7"/></svg>
<div class="t" style="left:61px;top:86px;font-size:14.500px;line-height:17px;font-weight:bold;color:#1f2229;letter-spacing:-.4px;word-spacing:2.400px">Lịch hẹn - Công ty cổ phần Bình Minh</div>
<div class="t" style="left:61px;top:112px;font-size:15px;line-height:17px;color:#3a3f4d;letter-spacing:0">Demo sản phẩm</div>
<div class="t" style="left:61px;top:140px;font-size:15px;line-height:17px;color:#656b80;letter-spacing:1.050px"><span style="letter-spacing:.03px">Hoàng Cẩm Tú (NV00...</span><span style="margin:0 6px 0 9px">·</span>11/10/2025</div>
<div class="abs" style="left:17px;top:187px;width:31px;height:31px;border-radius:50%;background:#eebd62"></div><svg class="abs" style="left:23px;top:187px;margin-top:6px" width="19" height="19" viewBox="0 0 17 17"><rect x="2.600" y="2.800" width="11.800" height="13" rx="2.200" fill="#fff"/><rect x="5.600" y="1.200" width="5.800" height="3.400" rx="1" fill="#fff" stroke="#eebd62" stroke-width=".8"/><path d="M6 9.800l1.800 1.800 3.300-3.500" stroke="#eebd62" stroke-width="1.200" fill="none" stroke-linecap="round" stroke-linejoin="round"/></svg>
<div class="t" style="left:61px;top:190px;font-size:14.500px;line-height:17px;font-weight:bold;color:#1f2229;letter-spacing:-.4px;word-spacing:2.400px">Nhiệm vụ - Công ty cổ phần Bình Minh</div>
<div class="t" style="left:61px;top:216px;font-size:15px;line-height:17px;color:#3a3f4d;letter-spacing:0">Gửi báo giá</div>
<div class="t" style="left:61px;top:244px;font-size:15px;line-height:17px;color:#656b80;letter-spacing:1.050px"><span style="letter-spacing:.03px">Hoàng Cẩm Tú (NV00...</span><span style="margin:0 6px 0 9px">·</span>10/10/2025</div>
<div class="abs" style="left:17px;top:291px;width:31px;height:31px;border-radius:50%;background:#45c9a5"></div><svg class="abs" style="left:22px;top:291px;margin-top:5px" width="21" height="21" viewBox="0 0 18 18"><path d="M4.800 1.800c.6-.3 1.300-.1 1.600.5l1.300 2.500c.3.500.1 1.100-.3 1.500l-1 .9c.9 2 2.300 3.400 4.300 4.300l.9-1c.4-.4 1-.6 1.500-.3l2.500 1.300c.6.300.8 1 .5 1.600l-.7 1.300c-.5.900-1.500 1.300-2.500 1.100-5.400-1.200-9.300-5.100-10.500-10.500-.2-1 .2-2 1.100-2.500z" fill="#fff"/></svg>
<div class="t" style="left:61px;top:294px;font-size:14.500px;line-height:17px;font-weight:bold;color:#1f2229;letter-spacing:-.4px;word-spacing:2.400px">Cuộc gọi - Công ty cổ phần Bình Minh</div>
<div class="t" style="left:61px;top:320px;font-size:15px;line-height:17px;color:#3a3f4d;letter-spacing:0">Gọi điện tư vấn</div>
<div class="t" style="left:61px;top:348px;font-size:15px;line-height:17px;color:#656b80;letter-spacing:1.050px"><span style="letter-spacing:.03px">Hoàng Cẩm Tú (NV00...</span><span style="margin:0 6px 0 9px">·</span>09/10/2025</div>
</div>
<div class="abs" style="left:1503px;top:45px;width:6px;height:603px;border-radius:3px;background:#c5c9d6"></div>
<div class="abs" style="left:0;top:448px;width:13px;height:44px;background:#fff;border-radius:0 6px 6px 0;box-shadow:1px 0 3px rgba(0,0,0,.12)"></div>
<svg class="abs" style="left:1px;top:464px" width="10" height="12" viewBox="0 0 10 12"><path d="M7 1.600 2.800 6l4.200 4.400" stroke="#4b5162" stroke-width="1.100" fill="none" stroke-linecap="round" stroke-linejoin="round"/></svg></div>
<div class="abs" style="left:1903px;top:771px;width:18px;height:35px;background:#063ad6;border-radius:4px 0 0 4px"></div><svg class="abs" style="left:1907px;top:782px" width="10" height="13" viewBox="0 0 10 13"><path d="M7 2 2.800 6.500l4.200 4.500" stroke="#fff" stroke-width="1.300" fill="none" stroke-linecap="round" stroke-linejoin="round"/></svg>
<div id="frame"></div>
</body>
</html>
